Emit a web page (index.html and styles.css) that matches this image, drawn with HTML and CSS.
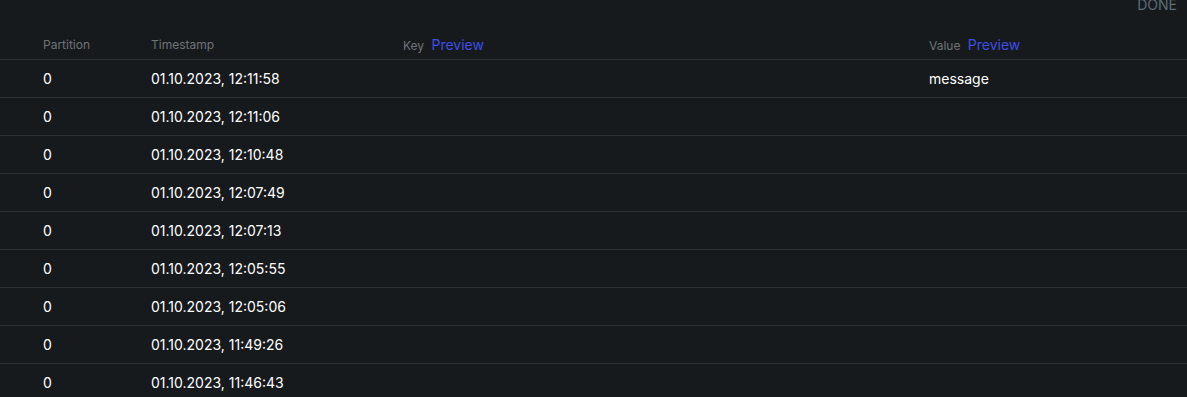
FILE: index.html
```html
<!DOCTYPE html>
<html lang="en">

<head>
    <meta charset="UTF-8">
    <meta name="viewport" content="width=device-width, initial-scale=1.0">
    <title>Messages</title>
    <link rel="stylesheet" href="styles.css">
</head>

<body>
    <div class="toolbar">
        <button class="done">DONE</button>
    </div>
    <div class="messages">
        <div class="row head">
            <div class="cell">Partition</div>
            <div class="cell">Timestamp</div>
            <div class="cell">Key <a class="preview">Preview</a></div>
            <div class="cell">Value <a class="preview">Preview</a></div>
        </div>
        <div class="row">
            <div class="cell">0</div>
            <div class="cell">01.10.2023, 12:11:58</div>
            <div class="cell"></div>
            <div class="cell">message</div>
        </div>
        <div class="row">
            <div class="cell">0</div>
            <div class="cell">01.10.2023, 12:11:06</div>
            <div class="cell"></div>
            <div class="cell"></div>
        </div>
        <div class="row">
            <div class="cell">0</div>
            <div class="cell">01.10.2023, 12:10:48</div>
            <div class="cell"></div>
            <div class="cell"></div>
        </div>
        <div class="row">
            <div class="cell">0</div>
            <div class="cell">01.10.2023, 12:07:49</div>
            <div class="cell"></div>
            <div class="cell"></div>
        </div>
        <div class="row">
            <div class="cell">0</div>
            <div class="cell">01.10.2023, 12:07:13</div>
            <div class="cell"></div>
            <div class="cell"></div>
        </div>
        <div class="row">
            <div class="cell">0</div>
            <div class="cell">01.10.2023, 12:05:55</div>
            <div class="cell"></div>
            <div class="cell"></div>
        </div>
        <div class="row">
            <div class="cell">0</div>
            <div class="cell">01.10.2023, 12:05:06</div>
            <div class="cell"></div>
            <div class="cell"></div>
        </div>
        <div class="row">
            <div class="cell">0</div>
            <div class="cell">01.10.2023, 11:49:26</div>
            <div class="cell"></div>
            <div class="cell"></div>
        </div>
        <div class="row">
            <div class="cell">0</div>
            <div class="cell">01.10.2023, 11:46:43</div>
            <div class="cell"></div>
            <div class="cell"></div>
        </div>
    </div>
</body>

</html>
```

FILE: styles.css
```css
* {
    box-sizing: border-box;
}

body {
    margin: 0;
    background-color: #171a1d;
    font-family: Inter, 'Noto Sans', sans-serif;
    color: #ffffff;
    overflow: hidden;
}

.toolbar {
    display: flex;
    justify-content: flex-end;
    height: 29px;
    padding-right: 10px;
}

.done {
    margin-top: -6px;
    height: 20px;
    padding: 0;
    border: none;
    background: none;
    color: #5c6a79;
    font-family: inherit;
    font-size: 14px;
}

.row {
    display: grid;
    grid-template-columns: 108px 252px 526px 1fr;
    align-items: center;
    height: 38px;
    padding-left: 43px;
    border-bottom: 1px solid #2e3134;
    font-size: 14px;
}

.row.head {
    height: 31px;
    font-size: 12px;
    color: #6f7378;
}

.preview {
    margin-left: 4px;
    color: #3d4de6;
    font-size: 14px;
    cursor: pointer;
}
```
